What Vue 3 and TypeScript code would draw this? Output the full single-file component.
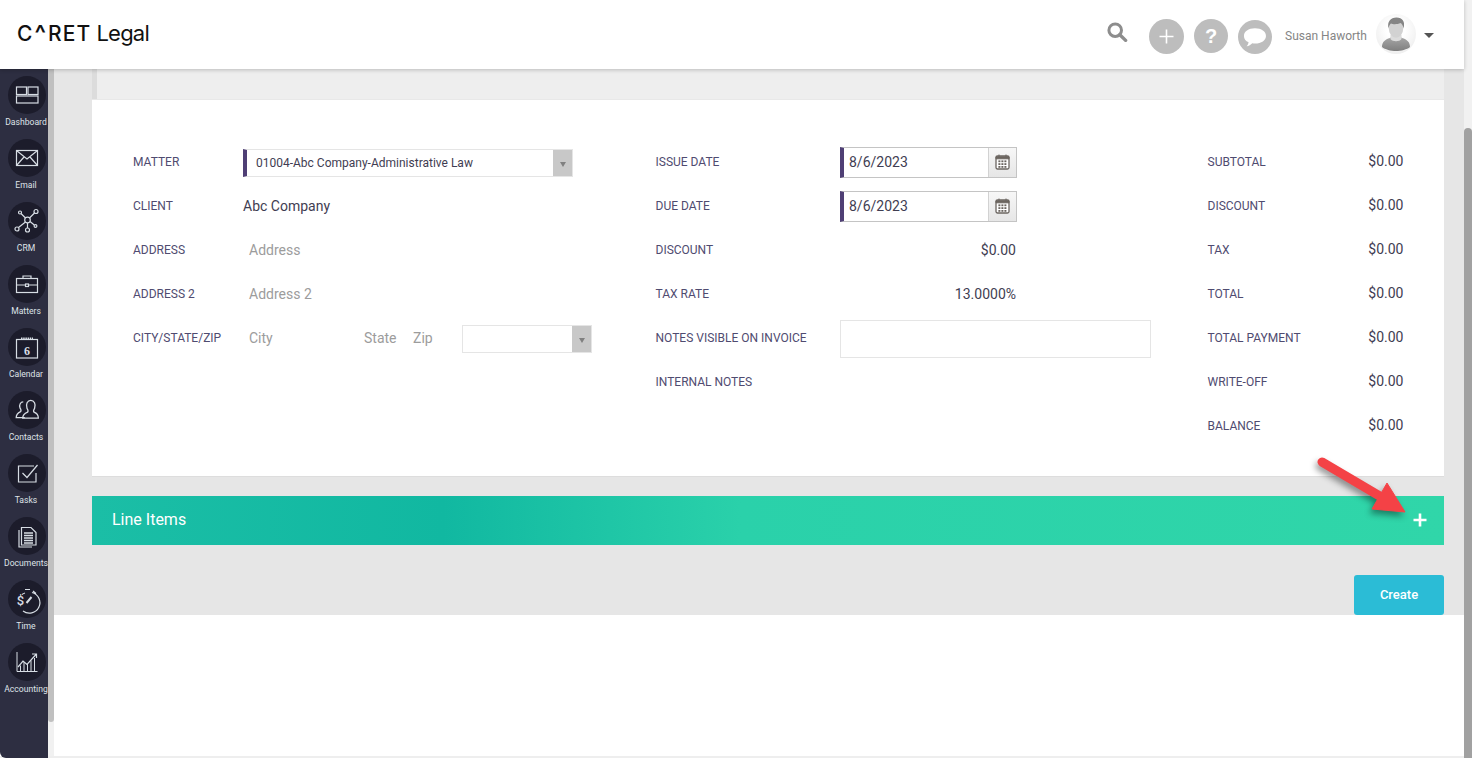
<script setup lang="ts">
interface NavItem { key: string; label: string }
const nav: NavItem[] = [
  { key: 'dashboard', label: 'Dashboard' },
  { key: 'email', label: 'Email' },
  { key: 'crm', label: 'CRM' },
  { key: 'matters', label: 'Matters' },
  { key: 'calendar', label: 'Calendar' },
  { key: 'contacts', label: 'Contacts' },
  { key: 'tasks', label: 'Tasks' },
  { key: 'documents', label: 'Documents' },
  { key: 'time', label: 'Time' },
  { key: 'accounting', label: 'Accounting' },
]
const totals: string[] = ['SUBTOTAL', 'DISCOUNT', 'TAX', 'TOTAL', 'TOTAL PAYMENT', 'WRITE-OFF', 'BALANCE']
const calCells: number[][] = [[0, 0], [1, 0], [2, 0], [0, 1], [1, 1], [2, 1], [0, 2], [1, 2], [2, 2]]
</script>

<template>
  <div class="page">
    <div class="main">
      <header class="topbar">
        <div class="logo"><span class="logo-strong">C<span class="caret">^</span>RET</span><span class="logo-light">Legal</span></div>
        <div class="tools">
          <svg class="search" width="21" height="20" viewBox="0 0 21 20">
            <circle cx="8.2" cy="8.2" r="6.3" fill="none" stroke="#8d8d8d" stroke-width="3" />
            <path d="M12.8 12.8 18.6 18.4" stroke="#8d8d8d" stroke-width="3.4" stroke-linecap="round" />
          </svg>
          <svg class="round r-plus" width="35" height="35" viewBox="0 0 35 35">
            <circle cx="17.5" cy="17.5" r="17.5" fill="#bdbdbd" />
            <path d="M17.5 10.500v14M10.500 17.500h14" stroke="#fff" stroke-width="1.600" />
          </svg>
          <span class="round r-help">?</span>
          <svg class="round r-chat" width="34" height="34" viewBox="0 0 34 34">
            <circle cx="17" cy="17" r="17" fill="#bdbdbd" />
            <path transform="translate(-1.400 -1.400) scale(1.080)" d="M17 9c6 0 10.200 3 10.200 7s-4.200 7-10.200 7c-.9 0-1.700-.1-2.500-.2-1.300 1.400-3.200 2.500-5.300 2.900 1-1.100 1.700-2.400 1.900-3.800C8.300 20.700 6.800 18.500 6.800 16c0-4 4.200-7 10.200-7Z" fill="#fff" />
          </svg>
          <span class="user">Susan Haworth</span>
          <span class="avatar">
            <svg width="40" height="40" viewBox="0 0 40 40">
              <defs>
                <linearGradient id="bodyShade" x1="0" y1="0" x2="0" y2="1"><stop offset="0" stop-color="#a8a8a8" /><stop offset="1" stop-color="#7f7f7f" /></linearGradient>
              </defs>
              <path d="M6 33c0-5 3-7.500 8-9l2-1.500h8l2 1.500c5 1.500 8 4 8 9-3 2.500-9 4-14 4s-11-1.500-14-4Z" fill="url(#bodyShade)" />
              <path d="M14.500 25c2 3 9 3 11 0v-4h-11Z" fill="#dcdcdc" />
              <ellipse cx="20" cy="14.500" rx="7.200" ry="9.300" fill="#d2d2d2" />
              <path d="M12.500 14.500c-1.500-7 2-11 8-11s9 4 7 11c-.6-3-1.500-4.500-3-5.500-3 1.500-7.500 1.500-9.500.5-1.200 1-2 2.500-2.500 5Z" fill="#858585" />
            </svg>
          </span>
          <span class="drop"></span>
        </div>
      </header>

      <div class="body">
        <nav class="sidebar">
          <a v-for="item in nav" :key="item.key" class="nav-item">
            <span class="nav-circle">
              <svg width="38" height="38" viewBox="0 0 38 38" fill="none" stroke="#d7dde4" stroke-width="1.200">
                <template v-if="item.key === 'dashboard'">
                  <rect x="8.500" y="11" width="10" height="7.500" /><rect x="20" y="11" width="10" height="7.500" /><rect x="8.500" y="20" width="21.500" height="7" />
                </template>
                <template v-else-if="item.key === 'email'">
                  <rect x="8.500" y="11.500" width="21" height="15" /><path d="M8.500 11.500 19 20l10.500-8.500M8.500 26.500l7.500-8.500M29.500 26.500 22 18" />
                </template>
                <template v-else-if="item.key === 'crm'">
                  <circle cx="19.500" cy="18" r="2.800" /><circle cx="12" cy="10.500" r="1.500" /><circle cx="28" cy="9.500" r="2" /><circle cx="9" cy="27" r="2" /><circle cx="19.500" cy="28" r="2" /><circle cx="27.500" cy="24" r="1.400" />
                  <path d="m13 11.500 4.500 4.500M26.500 11l-5 5M10.500 25.500l7-5.500M19.500 21v5M22 19.500l4.300 3.500" />
                </template>
                <template v-else-if="item.key === 'matters'">
                  <rect x="8.500" y="13.500" width="21" height="14" /><path d="M15 13.500V11h8v2.500M8.500 20h9M20.500 20h9" /><rect x="17.500" y="19" width="3" height="2.500" />
                </template>
                <template v-else-if="item.key === 'calendar'">
                  <rect x="8.500" y="11.500" width="21" height="18.500" /><path d="M13 10.500h12" stroke-width="2" stroke-dasharray="1.500 .7" />
                  <text x="19" y="26.500" text-anchor="middle" class="cal-six">6</text>
                </template>
                <template v-else-if="item.key === 'contacts'">
                  <g transform="translate(-1.500 -2) scale(1.080)">
                    <path d="M17 26.500H9c0-3.500 2-4.500 4-5.500 1-1 .5-2-.5-3.500-1-3 .5-5.500 3-5.500" />
                    <path d="M29.500 27H15c0-3.500 2-4.500 4.500-5.500 1-1 .5-2-.5-3.500-1.500-4 .5-7.500 3.500-7.500s5 3.500 3.500 7.500c-1 1.500-1.500 2.500-.5 3.500 2.500 1 4 2 4 5.500Z" />
                  </g>
                </template>
                <template v-else-if="item.key === 'tasks'">
                  <path d="M28 19v9H10.500V12H26" /><path d="m14.500 19 4.500 4.500L29.500 11" />
                </template>
                <template v-else-if="item.key === 'documents'">
                  <path d="M11 13v17h13" /><path d="M13.500 10.500h9.500l5 5V28h-14.500Z" fill="#1c1c2b" /><path d="M16 16h9M16 18.500h9M16 21h9M16 23.500h9M16 26h9" stroke-width="1.300" />
                </template>
                <template v-else-if="item.key === 'time'">
                  <path d="M24 12.500a10.500 10.500 0 1 1-9 18.500M14 14.500a10.500 10.500 0 0 1 3-1.500M17 9.500h5M25 11l3 2.500" />
                  <path d="m18.500 23 5-6" stroke-width="2" />
                  <text x="12.500" y="24.500" text-anchor="middle" class="dollar">$</text>
                </template>
                <template v-else>
                  <path d="M9 9v19.500h20.500M12.500 28.500v-6M16 28.500V19M19.500 28.500V21M23 28.500v-11M26.500 28.500V15" stroke-width="1" />
                  <path d="m10 24 5-6 4 3.500 9-10M24 11h4.500v4" />
                </template>
              </svg>
            </span>
            <span class="nav-label">{{ item.label }}</span>
          </a>
        </nav>
        <div class="side-scroll"><div class="side-thumb"></div></div>

        <div class="content">
          <section class="panel">
            <div class="strip"></div>
            <div class="card">
              <div class="col col-a">
                <div class="row"><label class="lbl">MATTER</label>
                  <div class="select req"><span class="sel-text">01004-Abc Company-Administrative Law</span><span class="sel-btn"><i></i></span></div>
                </div>
                <div class="row"><label class="lbl">CLIENT</label><span class="val">Abc Company</span></div>
                <div class="row"><label class="lbl">ADDRESS</label><span class="ph">Address</span></div>
                <div class="row"><label class="lbl">ADDRESS 2</label><span class="ph">Address 2</span></div>
                <div class="row"><label class="lbl">CITY/STATE/ZIP</label>
                  <span class="ph city">City</span><span class="ph state">State</span><span class="ph zip">Zip</span>
                  <div class="select small"><span class="sel-text"></span><span class="sel-btn"><i></i></span></div>
                </div>
              </div>

              <div class="col col-b">
                <div class="row" v-for="d in ['ISSUE DATE', 'DUE DATE']" :key="d"><label class="lbl">{{ d }}</label>
                  <div class="date"><span class="date-text">8/6/2023</span>
                    <span class="date-btn">
                      <svg width="15" height="16" viewBox="0 0 15 16">
                        <rect x="1" y="2" width="13" height="13" rx="1.500" fill="#fff" stroke="#6b6560" stroke-width="1.300" />
                        <path d="M1 2.800h13v2H1zM4 .5v2.500M11 .5v2.500" stroke="#6b6560" stroke-width="1" fill="#6b6560" />
                        <rect v-for="c in calCells" :key="c.join()" :x="3.400 + c[0] * 3" :y="6.400 + c[1] * 2.800" width="2" height="1.800" fill="#6b6560" />
                      </svg>
                    </span>
                  </div>
                </div>
                <div class="row"><label class="lbl">DISCOUNT</label><span class="val num">$0.00</span></div>
                <div class="row"><label class="lbl">TAX RATE</label><span class="val num">13.0000%</span></div>
                <div class="row"><label class="lbl">NOTES VISIBLE ON INVOICE</label><div class="notes"></div></div>
                <div class="row"><label class="lbl">INTERNAL NOTES</label></div>
              </div>

              <div class="col col-c">
                <div class="row between" v-for="t in totals" :key="t"><label class="lbl">{{ t }}</label><span class="val total">$0.00</span></div>
              </div>
            </div>

            <div class="line-items">
              <span>Line Items</span>
              <svg width="14" height="14" viewBox="0 0 14 14"><path d="M7 .5v13M.5 7h13" stroke="#fff" stroke-width="2.600" /></svg>
              <svg class="arrow" width="100" height="70" viewBox="0 0 100 70">
                <path d="M7 7 68 43" stroke="#f44246" stroke-width="9" stroke-linecap="round" fill="none" />
                <path d="M72 28 90 57 57 54Z" fill="#f44246" stroke="#f44246" stroke-linejoin="round" />
              </svg>
            </div>

            <div class="actions"><button class="create" type="button">Create</button></div>
          </section>
        </div>
      </div>
    </div>
    <div class="page-scroll"><div class="page-thumb"></div></div>
  </div>
</template>

<style>
html, body { margin: 0; background: #fff; overflow: hidden; }
</style>

<style scoped>
.page { display: flex; width: 1472px; height: 758px; overflow: hidden; font-family: Roboto, "Liberation Sans", sans-serif; background: #fff; }
.main { flex: 1; min-width: 0; display: flex; flex-direction: column; border-bottom: 2px solid #eee; box-sizing: border-box; height: 758px; }
.page-scroll { width: 8px; background: #f1f1f1; padding-top: 128px; box-sizing: border-box; }
.page-thumb { height: 630px; background: #a1a1a1; border-radius: 4px 4px 0 0; }

.topbar { height: 69px; flex: none; display: flex; align-items: center; justify-content: space-between; background: #fff; position: relative; z-index: 2; box-shadow: 0 1px 4px rgba(0, 0, 0, .22); }
.logo { margin-left: 17px; display: flex; align-items: baseline; gap: 5px; color: #111; font-family: Inter, Roboto, sans-serif; line-height: 26px; margin-top: -2px; }
.logo-strong { font-size: 21px; font-weight: 500; letter-spacing: 1.200px; }
.caret { font-size: 24px; line-height: 0; font-weight: 600; margin: 0 .5px 0 1px; position: relative; top: 1px; }
.logo-light { font-size: 22px; font-weight: 400; letter-spacing: -.8px; }
.tools { display: flex; align-items: center; height: 69px; }
.search { margin-right: 21px; margin-top: -6px; }
.round { display: block; flex: none; }
.r-plus { margin-top: 3px; }
.r-help { width: 34px; height: 34px; margin: 3px 0 0 10px; border-radius: 50%; background: #bdbdbd; color: #fff; font: 700 20px/34px "Liberation Sans", sans-serif; text-align: center; }
.r-chat { margin: 5px 0 0 10px; }
.user { margin-left: 13px; width: 91px; color: #858585; font-size: 12px; line-height: 14px; white-space: nowrap; margin-top: 2px; }
.avatar { width: 40px; height: 40px; border-radius: 50%; overflow: hidden; background: radial-gradient(circle at 50% 40%, #fff 30%, #e7e7e7 100%); margin-top: -2px; }
.avatar svg { display: block; }
.drop { width: 0; height: 0; border-left: 5.500px solid transparent; border-right: 5.500px solid transparent; border-top: 5px solid #555; margin: 1px 30px 0 8px; }

.body { flex: 1; min-height: 0; display: flex; }
.sidebar { width: 48px; flex: none; background: #2d2e41; border-radius: 0 0 0 6px; display: flex; flex-direction: column; padding-top: 7px; box-sizing: border-box; overflow: hidden; margin-bottom: -2px; }
.nav-item { height: 63px; flex: none; display: flex; flex-direction: column; align-items: flex-start; width: 48px; overflow: hidden; }
.nav-circle { width: 38px; height: 38px; border-radius: 50%; background: #1c1c2b; flex: none; margin-left: 8px; }
.nav-circle svg { display: block; }
.nav-label { font-size: 8.600px; line-height: 12px; margin: 2px 0 0 4px; color: #dfe3e8; white-space: nowrap; width: 44px; text-align: center; flex: none; }
.cal-six { font: 700 12px "Liberation Serif", serif; fill: #d7dde4; stroke: none; }
.dollar { font: 500 13px Roboto, sans-serif; fill: #d7dde4; stroke: none; }

.side-scroll { width: 6px; flex: none; background: #f1f1f1; }
.side-thumb { height: 653px; background: #c0c0c0; border-radius: 0 0 3px 3px; }

.content { flex: 1; min-width: 0; }
.panel { height: 546px; box-sizing: border-box; background: #e6e6e6; padding: 0 20px 0 38px; display: flex; flex-direction: column; }
.strip { height: 30px; flex: none; background: #eee; border-left: 5px solid #dcdcdc; box-sizing: border-box; }
.card { height: 378px; flex: none; box-sizing: border-box; background: #fff; border-top: 1px solid #e8e8e8; border-bottom: 1px solid #ddd; padding: 40px 40px 0 41px; display: flex; }
.col-a { width: 522.500px; flex: none; }
.col-b { width: 552px; flex: none; }
.col-c { flex: 1; min-width: 0; }
.row { height: 44px; display: flex; align-items: center; box-sizing: border-box; }
.between { justify-content: space-between; }
.lbl { flex: none; font-size: 12px; line-height: 14px; color: #4f4b70; }
.col-a .lbl { width: 110px; }
.col-b .lbl { width: 184.500px; }
.val { font-size: 14px; color: #3f3d52; line-height: 16px; }
.total { margin-top: -2px; margin-right: .5px; }
.num { width: 176px; text-align: right; }
.ph { font-size: 14px; color: #9c9c9c; line-height: 16px; }
.col-a .ph:not(.city):not(.state):not(.zip) { margin-left: 6px; }
.city { margin-left: 6px; width: 115px; }
.state { width: 49px; }
.zip { width: 49px; }

.select { display: flex; height: 28px; box-sizing: border-box; border: 1px solid #e5e5e5; background: #fff; margin-top: 2px; }
.req { width: 330px; border-left: 4px solid #4f3f75; }
.small { width: 130px; }
.sel-text { flex: 1; min-width: 0; font-size: 12px; line-height: 26px; color: #3f3d52; padding-left: 9px; white-space: nowrap; }
.sel-btn { width: 19px; flex: none; background: #c8c8c8; display: flex; align-items: center; justify-content: center; }
.sel-btn i { width: 0; height: 0; border-left: 3px solid transparent; border-right: 3px solid transparent; border-top: 5px solid #808080; margin-top: 2px; }

.date { width: 177px; height: 31px; box-sizing: border-box; display: flex; border: 1px solid #c4c4c4; border-left: 4px solid #4f3f75; background: #fff; }
.date-text { flex: 1; font-size: 14px; line-height: 28px; color: #3f3d52; padding-left: 5px; }
.date-btn { width: 27px; flex: none; border-left: 1px solid #d2d2d2; background: linear-gradient(#f7f7f7, #e6e6e6); display: flex; align-items: center; justify-content: center; }
.notes { width: 311px; height: 38px; box-sizing: border-box; border: 1px solid #e5e5e5; background: #fff; margin-top: 2px; }

.line-items { height: 49px; box-sizing: border-box; flex: none; margin-top: 19px; display: flex; align-items: center; justify-content: space-between; padding: 0 17px 2px 20px; color: #fff; font-size: 16px; position: relative; background: linear-gradient(90deg, #1bbea6 0%, #11b8a1 26%, #2ad1aa 48%, #30d6a9 100%); }
.arrow { position: absolute; left: 1223px; top: -41px; filter: drop-shadow(-2px 4px 3px rgba(0, 0, 0, .4)); }
.actions { margin-top: 30px; display: flex; justify-content: flex-end; }
.create { width: 90px; height: 40px; border: 0; border-radius: 3px; background: #2bbcd6; color: #fff; font: 500 13px Roboto, sans-serif; padding: 0 0 2px; }
</style>
